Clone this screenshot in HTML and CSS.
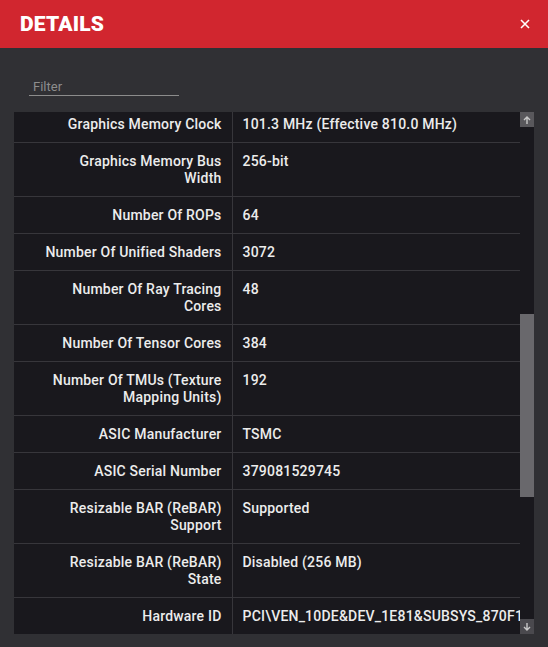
FILE: index.html
```html
<!DOCTYPE html>
<html lang="en">
<head>
    <meta charset="UTF-8">
    <meta name="viewport" content="width=device-width, initial-scale=1.0">
    <title>Details</title>
    <link rel="stylesheet" href="styles.css">
</head>
<body>

<div class="details-dialog">
    <div class="dialog-header">
        <h2>DETAILS</h2>
        <button class="close-button" id="closeButton">
            <svg width="10" height="10" viewBox="0 0 10 10"><path d="M1 1L9 9M9 1L1 9" stroke="#fff" stroke-width="1.6"/></svg>
        </button>
    </div>

    <div class="dialog-body">
        <input class="filter-input" type="text" placeholder="Filter">

        <div class="details-panel">
            <div class="details-scroll" id="detailsScroll">
                <table class="details-table">
                    <colgroup>
                        <col class="key-col">
                        <col>
                    </colgroup>
                    <tr><td class="key">Graphics Memory Clock</td><td class="value">101.3 MHz (Effective 810.0 MHz)</td></tr>
                    <tr><td class="key">Graphics Memory Bus Width</td><td class="value">256-bit</td></tr>
                    <tr><td class="key">Number Of ROPs</td><td class="value">64</td></tr>
                    <tr><td class="key">Number Of Unified Shaders</td><td class="value">3072</td></tr>
                    <tr><td class="key">Number Of Ray Tracing Cores</td><td class="value">48</td></tr>
                    <tr><td class="key">Number Of Tensor Cores</td><td class="value">384</td></tr>
                    <tr><td class="key">Number Of TMUs (Texture Mapping Units)</td><td class="value">192</td></tr>
                    <tr><td class="key">ASIC Manufacturer</td><td class="value">TSMC</td></tr>
                    <tr><td class="key">ASIC Serial Number</td><td class="value">379081529745</td></tr>
                    <tr><td class="key">Resizable BAR (ReBAR) Support</td><td class="value">Supported</td></tr>
                    <tr><td class="key">Resizable BAR (ReBAR) State</td><td class="value">Disabled (256 MB)</td></tr>
                    <tr><td class="key">Hardware ID</td><td class="value">PCI\VEN_10DE&amp;DEV_1E81&amp;SUBSYS_870F1043&amp;REV_A1</td></tr>
                </table>
            </div>

            <div class="scrollbar">
                <div class="scroll-arrow">
                    <svg width="10" height="10" viewBox="0 0 10 10"><path d="M5 9V2M2 5L5 2L8 5" stroke="#c8c8c8" stroke-width="1.4" fill="none"/></svg>
                </div>
                <div class="scroll-track">
                    <div class="scroll-thumb" style="margin-top: 187px; height: 183px;"></div>
                </div>
                <div class="scroll-arrow down">
                    <svg width="10" height="10" viewBox="0 0 10 10"><path d="M5 1V8M2 5L5 8L8 5" stroke="#c8c8c8" stroke-width="1.4" fill="none"/></svg>
                </div>
            </div>
        </div>
    </div>
</div>

<script>
    // list is scrolled a little past the first row
    document.getElementById('detailsScroll').scrollTop = 6;
</script>

</body>
</html>
```

FILE: styles.css
```css
body {
    margin: 0;
    font-family: Roboto, "Liberation Sans", sans-serif;
    background-color: #303034;
    color: #ececec;
}
.details-dialog {
    width: 548px;
    height: 647px;
    display: flex;
    flex-direction: column;
}
.dialog-header {
    height: 48px;
    background-color: #d1262f;
    display: flex;
    align-items: center;
    justify-content: space-between;
    padding: 0 17px 0 20px;
}
.dialog-header h2 {
    margin: 0;
    font-size: 21px;
    font-weight: 900;
    color: #fff;
    letter-spacing: 0.2px;
}
.close-button {
    background: none;
    border: none;
    padding: 0;
    width: 12px;
    height: 12px;
    display: flex;
    align-items: center;
    justify-content: center;
    cursor: pointer;
}
.dialog-body {
    flex: 1;
    padding: 30px 14px 13px 14px;
    display: flex;
    flex-direction: column;
}
.filter-input {
    box-sizing: border-box;
    width: 150px;
    margin-left: 15px;
    background: transparent;
    border: none;
    border-bottom: 1px solid #8c8c8c;
    padding: 1px 4px 1px 4px;
    font-family: inherit;
    font-size: 13px;
    color: #ddd;
    outline: none;
}
.filter-input::placeholder {
    color: #8d8d8d;
}
.details-panel {
    margin-top: 16px;
    height: 522px;
    background-color: #19181d;
    display: flex;
}
.details-scroll {
    flex: 1;
    overflow: hidden;
}
.details-table {
    width: 100%;
    table-layout: fixed;
    border-collapse: collapse;
    font-size: 14px;
    font-weight: 500;
    line-height: 17px;
    letter-spacing: 0.2px;
}
.key-col {
    width: 218px;
}
.details-table td {
    padding: 10px 10px 9px 10px;
    border-bottom: 1px solid #37363b;
    vertical-align: top;
}
.details-table .key {
    padding-left: 29px;
    text-align: right;
    border-right: 1px solid #37363b;
}
.details-table .value {
    white-space: nowrap;
    overflow: hidden;
}
.scrollbar {
    width: 14px;
    display: flex;
    flex-direction: column;
}
.scroll-arrow {
    height: 15px;
    background-color: #59585c;
    display: flex;
    align-items: center;
    justify-content: center;
}
.scroll-arrow.down {
    background-color: #4a494e;
}
.scroll-track {
    flex: 1;
}
.scroll-thumb {
    background-color: #69686c;
}
```
